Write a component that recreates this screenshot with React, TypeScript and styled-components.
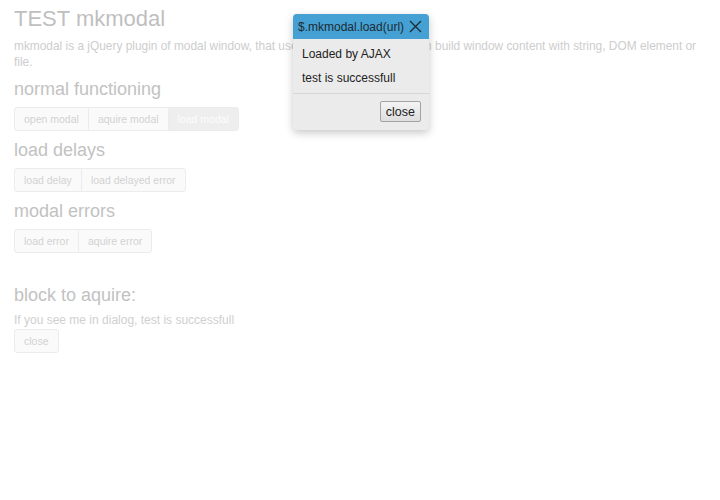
import styled, { createGlobalStyle } from "styled-components";

const Global = createGlobalStyle`
  html, body { margin: 0; background: #fff; }
  body { font-family: "Liberation Sans", Arial, sans-serif; }
`;

const Page = styled.div`
  position: relative;
  width: 720px;
  height: 500px;
  padding: 7px 14px 0;
  box-sizing: border-box;
  color: #cfcfcf;
`;

const Title = styled.h1`
  margin: 0;
  font-size: 22px;
  line-height: 24px;
  font-weight: normal;
  color: #bfbfbf;
`;

const Intro = styled.p`
  margin: 7px 0 0;
  font-size: 11.9px;
  line-height: 16px;
  color: #cdcdcd;
`;

const Section = styled.h2<{ $gap?: number }>`
  margin: ${(p) => p.$gap ?? 9}px 0 0;
  font-size: 18px;
  line-height: 20px;
  font-weight: normal;
  color: #c2c2c2;
`;

const GroupWrap = styled.div<{ $gap?: number }>`
  display: flex;
  margin-top: ${(p) => p.$gap ?? 8}px;
`;

const Group = styled.div`
  display: inline-flex;
  border: 1px solid #ececec;
  border-radius: 3px;
  background: #fafafa;
`;

const Btn = styled.span<{ $active?: boolean }>`
  height: 22px;
  line-height: 22px;
  padding: 0 9px;
  font-size: 10.5px;
  color: ${(p) => (p.$active ? "#fdfdfd" : "#d2d2d2")};
  background: ${(p) => (p.$active ? "#eeeeee" : "transparent")};
  & + & { border-left: 1px solid #ececec; }
`;

const Note = styled.p`
  margin: 7px 0 0;
  font-size: 12px;
  line-height: 16px;
  color: #d0d0d0;
`;

const Modal = styled.div`
  position: absolute;
  left: 293px;
  top: 14px;
  width: 136px;
  background: #ebebeb;
  border-radius: 4px;
  box-shadow: 0 3px 9px rgba(0, 0, 0, 0.22);
  overflow: hidden;
`;

const ModalHead = styled.div`
  display: flex;
  align-items: center;
  justify-content: space-between;
  height: 25px;
  padding: 0 7px 0 5px;
  background: #45a1d3;
  color: #1e2a33;
  font-size: 12px;
`;

const ModalBody = styled.div`
  padding: 3px 9px 3px;
  border-bottom: 1px solid #d6d6d6;
  font-size: 12px;
  color: #222;
  p { margin: 0; line-height: 24px; }
`;

const ModalFoot = styled.div`
  display: flex;
  justify-content: flex-end;
  padding: 7px 8px 8px;
`;

const CloseBtn = styled.button`
  height: 21px;
  padding: 0 5px;
  font-family: "Liberation Sans", Arial, sans-serif;
  font-size: 12.5px;
  color: #222;
  background: linear-gradient(#f4f4f4, #dedede);
  border: 1px solid #a3a3a3;
  border-radius: 2px;
`;

const sections = [
  { title: "load delays", buttons: ["load delay", "load delayed error"] },
  { title: "modal errors", buttons: ["load error", "aquire error"] },
];

export default function App() {
  return (
    <>
      <Global />
      <Page>
        <Title>TEST mkmodal</Title>
        <Intro>
          mkmodal is a jQuery plugin of modal window, that use css3 transitions. You can build window content with string, DOM element or file.
        </Intro>
        <Section>normal functioning</Section>
        <GroupWrap>
          <Group>
            <Btn>open modal</Btn>
            <Btn>aquire modal</Btn>
            <Btn $active>load modal</Btn>
          </Group>
        </GroupWrap>
        {sections.map((s) => (
          <div key={s.title}>
            <Section>{s.title}</Section>
            <GroupWrap>
              <Group>
                {s.buttons.map((b) => (
                  <Btn key={b}>{b}</Btn>
                ))}
              </Group>
            </GroupWrap>
          </div>
        ))}
        <Section $gap={32}>block to aquire:</Section>
        <Note>If you see me in dialog, test is successfull</Note>
        <GroupWrap $gap={1}>
          <Group>
            <Btn>close</Btn>
          </Group>
        </GroupWrap>

        <Modal>
          <ModalHead>
            <span>$.mkmodal.load(url)</span>
            <svg width="13" height="13" viewBox="0 0 13 13">
              <path d="M1 1L12 12M12 1L1 12" stroke="#1e2a33" strokeWidth="1.3" />
            </svg>
          </ModalHead>
          <ModalBody>
            <p>Loaded by AJAX</p>
            <p>test is successfull</p>
          </ModalBody>
          <ModalFoot>
            <CloseBtn>close</CloseBtn>
          </ModalFoot>
        </Modal>
      </Page>
    </>
  );
}
